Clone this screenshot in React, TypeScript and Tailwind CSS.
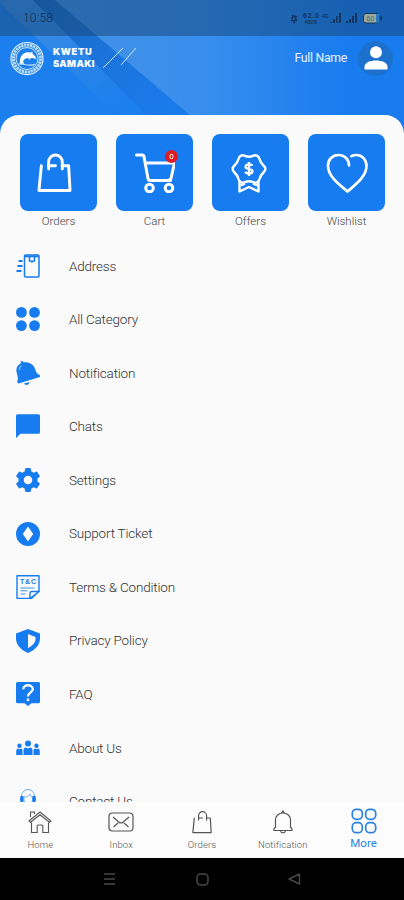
import type { ReactNode } from "react";

const LABEL_FONT = "font-['Roboto','Noto_Sans',sans-serif]";

function BagIcon({ className, strokeWidth = 3 }: { className?: string; strokeWidth?: number }) {
  return (
    <svg viewBox="0 0 36 42" fill="none" stroke="currentColor" strokeWidth={strokeWidth} strokeLinecap="round" strokeLinejoin="round" className={className}>
      <path d="M4.500 14 2 39.500H34L32.500 14H26" />
      <path d="M12 17.500V10a7 7 0 0 1 14 0v7.500" />
      <path d="M12 14h7" />
    </svg>
  );
}

function CartIcon() {
  return (
    <svg viewBox="0 0 40 40" fill="none" stroke="currentColor" strokeWidth="3" strokeLinecap="round" strokeLinejoin="round" className="size-10">
      <path d="M1.500 2h5.500a2 2 0 0 1 2 1.800L13 25.500q.4 2 2 2h20.500M10.500 10h29l-3.500 15.500q-.5 1.500-2 1.500" />
      <circle cx="14.500" cy="35" r="3.800" />
      <circle cx="34" cy="35" r="3.800" />
    </svg>
  );
}

function OfferIcon() {
  return (
    <svg viewBox="0 0 36 40" fill="none" stroke="currentColor" strokeWidth="2.400" strokeLinejoin="round" className="relative -left-[2px] h-10 w-9">
      <path d="M14 2.800q4 1.800 8 0c3-1.300 5.500-.2 6.500 3.200.8 3 1.800 4.500 4 6.500 2.500 2.300 2.500 4.700 0 7-2.200 2-3.200 3.500-4 6.500-1 3.400-3.500 4.500-6.500 3.200q-4-1.800-8 0c-3 1.300-5.500.2-6.500-3.200-.8-3-1.800-4.500-4-6.500-2.500-2.300-2.500-4.700 0-7 2.200-2 3.200-3.500 4-6.500 1-3.400 3.500-4.500 6.500-3.200Z" />
      <path d="M8.500 27v11.500l9.500-4.500 9.500 4.500V27M10 32.500l4-2m12 2-4-2" />
      <path d="M21.500 12.800c-1-1.800-6.700-2-7 .9-.4 3 7.400 1.400 7 4.800-.3 2.700-6 2.700-7.300.4M18 9v14" strokeWidth="2.300" />
    </svg>
  );
}

function HeartIcon() {
  return (
    <svg viewBox="0 0 42 40" fill="none" stroke="currentColor" strokeWidth="2.700" strokeLinecap="round" strokeLinejoin="round" className="h-10 w-[42px]">
      <path d="M23 12.500C23 6 18 2 12.500 2 6.500 2 2 6.500 2 13c0 10.500 12 19 19.500 25.500C29 32 40.500 23.500 40.500 13 40.500 6.500 36 2 30.500 2c-2 0-3.500.3-5 1.200" />
    </svg>
  );
}

function Logo() {
  return (
    <svg viewBox="0 0 36 36" fill="none" className="relative -left-px h-[35px] w-[36px]">
      <circle cx="18" cy="18" r="16.500" stroke="#e4f1fb" strokeWidth="1.200" />
      <circle cx="18" cy="18" r="13.900" stroke="#b9dcf5" strokeWidth="3.200" strokeDasharray="2.400 .7" />
      <circle cx="18" cy="18" r="11.300" stroke="#e4f1fb" strokeWidth=".9" />
      <path d="M11 18.500c1-5 6-8 10.500-6.500l2-1.500.2 2.500c2.300 1.500 3.600 3.600 4 6-2-1.300-4-1.600-5.500-1.500l-2 2-.8-2c-3 0-4.700 1.300-5.400 3.700l1 3-2.500-1-2.300 1.300.5-3Z" fill="#fff" />
      <path d="M9 24c5-2 8 3 17 0" stroke="#b9dcf5" strokeWidth="1.200" />
    </svg>
  );
}

function StatusIcons() {
  return (
    <svg viewBox="0 0 96 14" fill="none" className="h-[14px] w-24 text-[#14355d]">
      <path d="M4 8.500V7a3 3 0 0 1 5-1M3 9.500h6M5 11.500h2M4 4l5 5" stroke="currentColor" strokeWidth="1.300" />
      <g fill="currentColor" className="font-['Liberation_Sans',sans-serif] font-bold">
        <text x="15" y="7" fontSize="7" textLength="16">62.0</text>
        <text x="17" y="12.500" fontSize="5">KB/S</text>
        <text x="34" y="6.500" fontSize="5">4G</text>
      </g>
      <path d="M42 11h2v1h-2zm3-3h2v4h-2zm3-3h1.500v7H48zm3-3h2v10h-2zM58 10h2v2h-2zm3-2h2v4h-2zm3-3h2v7h-2zm3-3h2v10h-2z" fill="currentColor" />
      <rect x="75.500" y="2.500" width="16" height="9.500" rx="2.500" fill="#99a99b" stroke="currentColor" />
      <path d="M88 3h2.500q1 0 1 1v6.500q0 1-1 1H88z" fill="#2778c6" />
      <path d="M93 5v4.500" stroke="currentColor" strokeWidth="1.500" />
      <text x="78.500" y="9.800" fontSize="7" fill="#4c6672" className="font-['Liberation_Sans',sans-serif]">60</text>
    </svg>
  );
}

function Header() {
  return (
    <header className="relative h-[133px] shrink-0 bg-[#1b7bea]">
      <svg viewBox="0 0 404 133" className="absolute inset-0 h-full w-full">
        <defs>
          <linearGradient id="shade" gradientUnits="userSpaceOnUse" x1="20" y1="0" x2="110" y2="115">
            <stop offset="0" stopColor="#3e8de2" />
            <stop offset="1" stopColor="#1b7fee" />
          </linearGradient>
          <linearGradient id="band" gradientUnits="userSpaceOnUse" x1="40" y1="0" x2="170" y2="115">
            <stop offset="0" stopColor="#1765bd" />
            <stop offset=".5" stopColor="#1b74dc" />
            <stop offset="1" stopColor="#1a7beb" />
          </linearGradient>
          <linearGradient id="glow" gradientUnits="userSpaceOnUse" x1="60" y1="0" x2="404" y2="0">
            <stop offset="0" stopColor="#4490e3" />
            <stop offset=".4" stopColor="#398fee" />
            <stop offset=".85" stopColor="#187bee" />
            <stop offset="1" stopColor="#187bee" />
          </linearGradient>
        </defs>
        <path d="M0 0v133h135L0 3Z" fill="#1b80ee" />
        <path d="M0 0v3l135 130h30L33 0Z" fill="url(#shade)" />
        <path d="M33 0h22l156 133h-76L80 80l23-20Z" fill="none" />
        <path d="M33 0h22l156 133h-47Z" fill="url(#band)" />
        <path d="M55 0h349v133H211Z" fill="url(#glow)" />
      </svg>
      <div className="relative flex h-9 items-center justify-between bg-[#174b80]/55 pl-[23px] pr-[20px]">
        <span className={`${LABEL_FONT} text-[12px] font-light tracking-[0.2px] text-[#102c52]`}>10:58</span>
        <StatusIcons />
      </div>
      <div className="relative flex h-11 items-center pl-[10px] pr-[11px]">
        <Logo />
        <div className="ml-[7px] w-[46px] font-['Inter','Open_Sans',sans-serif] text-[9.3px] font-black text-white">
          <div className="h-3 leading-3 tracking-[0.7px]">KWETU</div>
          <div className="h-3 leading-3 tracking-[0.4px]">SAMAKI</div>
        </div>
        <svg viewBox="0 0 36 24" className="ml-[3px] h-6 w-9 stroke-[#d4e7fc]" strokeWidth="1">
          <path d="M1 22 21 2M19 19 34 2" />
        </svg>
        <span className={`${LABEL_FONT} ml-auto text-[12.3px] tracking-[-0.3px] text-[#e7f2ff]`}>Full Name</span>
        <div className="ml-[11px] grid size-[35px] place-items-center rounded-full bg-[#1c71cf] text-white">
          <svg viewBox="0 0 24 24" fill="currentColor" className="size-6">
            <circle cx="12" cy="6.300" r="6" />
            <path d="M.5 23.500v-2.800C.5 12.500 23.500 12.500 23.500 20.700v2.800Z" />
          </svg>
        </div>
      </div>
    </header>
  );
}

const TILES: { label: string; icon: ReactNode; count?: number }[] = [
  { label: "Orders", icon: <BagIcon className="relative -left-[4px] h-[41px] w-[35px]" /> },
  { label: "Cart", icon: <CartIcon />, count: 0 },
  { label: "Offers", icon: <OfferIcon /> },
  { label: "Wishlist", icon: <HeartIcon /> },
];

const MENU: { label: string; icon: ReactNode }[] = [
  {
    label: "Address",
    icon: (
      <g fill="none" stroke="currentColor" strokeWidth="1.500">
        <rect x="8.500" y="1" width="14.500" height="22" rx="1" />
        <path d="M9 2.300h13.500" strokeWidth="2" />
        <path d="M13.500 3v4h1.500l1 1 1-1h1.500V3" />
        <path d="M2.500 7h4M1.500 12h5M.5 17h5" strokeWidth="2.200" />
      </g>
    ),
  },
  {
    label: "All Category",
    icon: (
      <>
        <circle cx="5.400" cy="5.400" r="5.400" />
        <circle cx="18.500" cy="5.400" r="5.400" />
        <circle cx="5.400" cy="18.600" r="5.400" />
        <circle cx="18.500" cy="18.600" r="5.400" />
      </>
    ),
  },
  {
    label: "Notification",
    icon: (
      <>
        <path d="M4.500.5 6.500 0l.8 1.300C13.500.8 18 3.500 19.300 8.500c.8 3 2 4.500 4.500 5.500l.2 2L2.500 22.500 1 21c1.500-2.500 1-5 .2-7.500C-.8 8 .8 4 5 2.200Z" />
        <path d="M8 22.500c2 2.500 5 1.500 5.500-1.500" />
        <path d="M3.500 9c-.3-2 .6-3.500 2.200-4.300" fill="none" stroke="#82b9f6" strokeWidth="1.200" />
      </>
    ),
  },
  { label: "Chats", icon: <path d="M1.500.3h21Q24 .3 24 1.800v16.400q0 1.500-1.500 1.500H4.500L0 24V1.800Q0 .3 1.500.3Z" /> },
  {
    label: "Settings",
    icon: (
      <path fillRule="evenodd" d="M9.400 0h5.200l.8 3.500 2.300 1.300 3.200-1.300L24 8.300l-2.500 2.300v2.800L24 15.700l-3.100 4.800-3.200-1.300-2.300 1.300-.8 3.500H9.400l-.8-3.500-2.300-1.300-3.200 1.300L0 15.700l2.500-2.300v-2.800L0 8.300l3.100-4.800 3.200 1.300 2.300-1.300ZM12 7.700a4.300 4.300 0 1 0 0 8.600 4.300 4.300 0 0 0 0-8.600Z" />
    ),
  },
  {
    label: "Support Ticket",
    icon: <path fillRule="evenodd" d="M12 0a12 12 0 1 0 0 24 12 12 0 0 0 0-24Zm0 4.500 5.200 7.500-5.200 7.500L6.800 12Z" />,
  },
  {
    label: "Terms & Condition",
    icon: (
      <>
        <path d="M1 .7h22V16l-7.500 7.500H1Z" fill="none" stroke="currentColor" strokeWidth="1.400" strokeLinejoin="round" />
        <path d="M14 23.500v-5q0-2 2-2h7Z" fill="#fafafa" stroke="currentColor" strokeWidth="1.400" />
        <text x="4" y="9" fontSize="7" textLength="16" className="font-['Liberation_Sans',sans-serif] font-bold">T&amp;C</text>
        <path d="M4.500 13h14M4.500 15.800h7M4.500 19h5" stroke="currentColor" strokeWidth="1" opacity=".8" />
      </>
    ),
  },
  {
    label: "Privacy Policy",
    icon: (
      <>
        <path d="M12 0 24 4.500v5C24 16 19 21 12 24 5 21 0 16 0 9.500v-5Z" />
        <path d="m12 5 7.500 3v2c0 4-3.500 7-7.500 9Z" fill="#fafafa" />
      </>
    ),
  },
  {
    label: "FAQ",
    icon: (
      <>
        <path d="M1.500 0h21Q24 0 24 1.500v18.200q0 1.500-1.500 1.500h-7L12 24l-3.500-2.800h-7Q0 21.200 0 19.700V1.500Q0 0 1.500 0Z" />
        <path d="M7.300 7.200c0-5.500 9.500-5 9.500 0 0 3.300-4.800 3.300-4.800 7.300M12 16.500v2.400" fill="none" stroke="#fff" strokeWidth="2.300" />
      </>
    ),
  },
  {
    label: "About Us",
    icon: (
      <>
        <circle cx="12" cy="7.500" r="3" />
        <circle cx="3.500" cy="9.700" r="2.200" />
        <circle cx="20.500" cy="9.700" r="2.200" />
        <path d="M7.500 19v-4.500q0-3 2.500-3l2 1 2-1q2.500 0 2.500 3V19ZM.2 19v-4q0-2.500 2-2.500l1.300.8 1.300-.8q1.700 0 1.700 2V19Zm17.300 0v-4.500q0-2 1.700-2l1.300.8 1.300-.8q2 0 2 2.500v4Z" />
      </>
    ),
  },
  {
    label: "Contact Us",
    icon: (
      <>
        <path d="M5.500 8V7a6.500 6.500 0 0 1 13 0v1M8 8c4 0 5-2 6-3 0 2 1 3 2.500 3v4l-4 4-4.500-4Z" fill="none" stroke="#6dafe8" strokeWidth="1" />
        <path d="M4.500 7h3v6.500h-2q-1.500-1-1.500-3Zm12 0h3l.5 3.500q0 2-1.500 3h-2Z" />
        <path d="M18 13q0 4-5 4M4 24q0-6 8-6t8 6" fill="none" stroke="currentColor" />
      </>
    ),
  },
];

const NAV: { label: string; icon: ReactNode; active?: boolean }[] = [
  {
    label: "Home",
    icon: (
      <svg viewBox="0 0 24 24" fill="none" stroke="currentColor" strokeWidth="1.100" className="size-6">
        <path d="m1 11 11-9 11 9-1.500 1.200L12 4.800l-9.500 7.400ZM3.500 12.500v10h5.700V16q0-1 1-1h3.600q1 0 1 1v6.500h5.700v-10M2.500 7V2h4v2" />
      </svg>
    ),
  },
  {
    label: "Inbox",
    icon: (
      <svg viewBox="0 0 26 24" fill="none" stroke="currentColor" strokeWidth="1.200" className="h-6 w-[26px]">
        <rect x="1" y="3" width="24" height="18" rx="3.500" />
        <path d="m5 7 5.700 5q2.300 2 4.600 0L21 7M5.500 17l4.500-4m10.500 4L16 13" />
      </svg>
    ),
  },
  { label: "Orders", icon: <BagIcon className="h-6 w-[22px]" strokeWidth={2.1} /> },
  {
    label: "Notification",
    icon: (
      <svg viewBox="0 0 24 24" fill="none" stroke="currentColor" strokeWidth="1.200" className="size-6">
        <path d="M3 20.500v-1.700l1.500-1.600V10c0-4 3-7 7.500-7s7.500 3 7.500 7v7.200l1.500 1.600v1.700ZM10.500 3l1.500-2 1.500 2M9.500 21c.5 2.500 4.500 2.500 5 0" />
      </svg>
    ),
  },
  {
    label: "More",
    active: true,
    icon: (
      <svg viewBox="0 0 26 26" fill="none" stroke="currentColor" strokeWidth="1.700" className="relative top-[-1px] size-[26px]">
        <rect x="1.300" y="1.300" width="10" height="10" rx="4" />
        <rect x="14.700" y="1.300" width="10" height="10" rx="4" />
        <rect x="1.300" y="14.700" width="10" height="10" rx="4" />
        <rect x="14.700" y="14.700" width="10" height="10" rx="4" />
      </svg>
    ),
  },
];

function BottomNav() {
  return (
    <nav className={`${LABEL_FONT} flex h-14 shrink-0 bg-[#fcfcfc] pt-[7px]`}>
      {NAV.map(({ label, icon, active }) => (
        <div key={label} className={`flex flex-1 flex-col items-center ${active ? "text-[#2b83de]" : "text-[#555]"}`}>
          <div className="grid h-[26px] place-items-center">{icon}</div>
          <span className={active ? "mt-px text-[11.5px] leading-[14px]" : "mt-[4px] text-[9.5px] leading-3 font-light tracking-[0.1px]"}>
            {label}
          </span>
        </div>
      ))}
    </nav>
  );
}

export default function App() {
  return (
    <div className="flex h-[900px] w-[404px] flex-col overflow-hidden bg-[#fafafa]">
      <Header />
      <main className={`${LABEL_FONT} relative -mt-[18px] min-h-0 flex-1 overflow-hidden rounded-t-[19px] bg-[#fafafa] pt-[19px]`}>
        <div className="flex justify-between pl-5 pr-[19px]">
          {TILES.map(({ label, icon, count }) => (
            <div key={label} className="flex w-[77px] flex-col items-center">
              <div className="relative grid size-[77px] place-items-center rounded-lg bg-[#167cf0] text-white">
                {icon}
                {count !== undefined && (
                  <span className="absolute top-[16px] right-[15px] grid size-[13px] place-items-center rounded-full bg-[#df1c24] text-[8px] leading-none">
                    {count}
                  </span>
                )}
              </div>
              <span className="mt-[3px] text-[11.5px] leading-[14px] font-light text-[#444]">{label}</span>
            </div>
          ))}
        </div>
        <ul className="mt-[11px]">
          {MENU.map(({ label, icon }) => (
            <li key={label} className="flex h-[53.55px] items-center pl-[15.5px]">
              <svg viewBox="0 0 24 24" fill="currentColor" className="size-6 text-[#167cf0]">
                {icon}
              </svg>
              <span className="ml-[29.5px] text-[13.5px] font-light tracking-[-0.2px] text-[#333]">{label}</span>
            </li>
          ))}
        </ul>
      </main>
      <BottomNav />
      <div className="flex h-[42px] shrink-0 items-center bg-black pl-[104px] text-[#484848]">
        <svg viewBox="0 0 12 12" fill="none" stroke="currentColor" strokeWidth="1.500" className="size-3">
          <path d="M0 1h11M0 6h11M0 11h11" />
        </svg>
        <svg viewBox="0 0 13 13" fill="none" stroke="currentColor" strokeWidth="1.500" className="ml-[80px] size-[13px]">
          <rect x="1" y="1" width="11" height="11" rx="3.500" />
        </svg>
        <svg viewBox="0 0 13 12" fill="none" stroke="currentColor" strokeWidth="1.400" className="ml-[79px] h-3 w-[13px]">
          <path d="M1 6 11.500 1v10Z" strokeLinejoin="round" />
        </svg>
      </div>
    </div>
  );
}
